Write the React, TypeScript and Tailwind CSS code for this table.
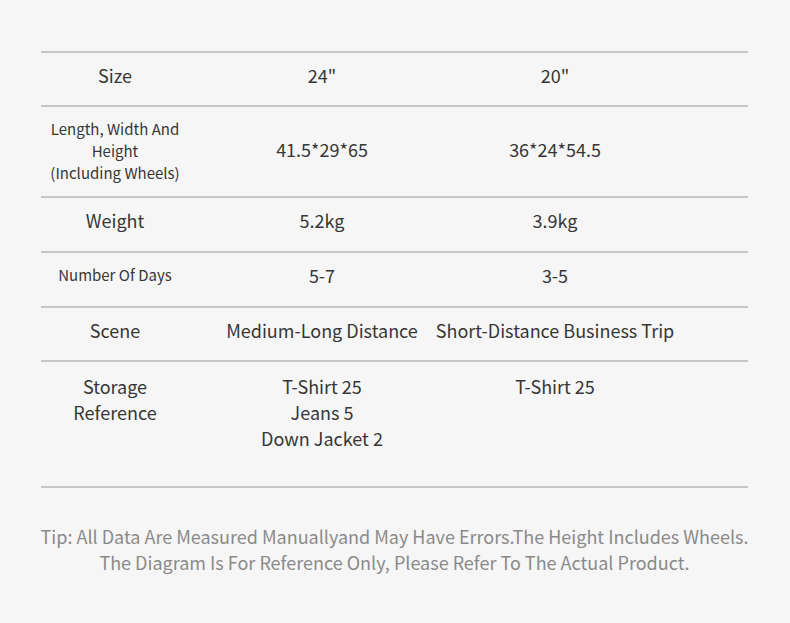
export default function App() {
    const rows = [
        { label: ['Size'], small: false, a: '24"', b: '20"', h: 'h-[54px] pb-[8px]', lp: '' },
        {
            label: ['Length, Width And', 'Height', '(Including Wheels)'],
            small: true,
            a: '41.5*29*65',
            b: '36*24*54.5',
            h: 'h-[91px] pb-[5px]',
            lp: 'pt-[4px]',
        },
        { label: ['Weight'], small: false, a: '5.2kg', b: '3.9kg', h: 'h-[55px] pb-[10px]', lp: '' },
        { label: ['Number Of Days'], small: true, a: '5-7', b: '3-5', h: 'h-[55px] pb-[10px]', lp: '' },
        { label: ['Scene'], small: false, a: 'Medium-Long Distance', b: 'Short-Distance Business Trip', h: 'h-[54px] pb-[8px]', lp: '' },
    ];

    return (
        <div
            className="w-[790px] h-[623px] bg-[#f6f6f6] text-[#363636] pt-[51px] px-[41px]"
            style={{ fontFamily: '"Noto Sans CJK SC", "Noto Sans", sans-serif' }}
        >
            <div className="w-[707px] border-t-2 border-[#c6c6c6]">
                {rows.map((r) => (
                    <div
                        key={r.a}
                        className={`grid grid-cols-[148px_266px_200px_1fr] items-center border-b-2 border-[#c6c6c6] ${r.h}`}
                    >
                        <div
                            className={
                                r.small
                                    ? `flex flex-col items-center text-[15px] leading-[22px] whitespace-nowrap ${r.lp}`
                                    : 'flex flex-col items-center text-[18px] leading-[26px]'
                            }
                        >
                            {r.label.map((l) => (
                                <span key={l}>{l}</span>
                            ))}
                        </div>
                        <div className="flex justify-center text-[18px] leading-[26px] whitespace-nowrap">{r.a}</div>
                        <div className="flex justify-center text-[18px] leading-[26px] whitespace-nowrap">{r.b}</div>
                        <div />
                    </div>
                ))}

                {/* Storage row: top aligned */}
                <div className="grid grid-cols-[148px_266px_200px_1fr] items-start h-[126px] border-b-2 border-[#c6c6c6] pt-[11px] text-[18px] leading-[26px]">
                    <div className="text-center">
                        Storage
                        <br />
                        Reference
                    </div>
                    <div className="text-center">
                        T-Shirt 25
                        <br />
                        Jeans 5
                        <br />
                        Down Jacket 2
                    </div>
                    <div className="text-center">T-Shirt 25</div>
                    <div />
                </div>
            </div>

            <div className="w-[707px] mt-[35px] flex flex-col items-center text-[18px] leading-[26px] text-[#8a8a8a] whitespace-nowrap">
                <span>Tip: All Data Are Measured Manuallyand May Have Errors.The Height Includes Wheels.</span>
                <span>The Diagram Is For Reference Only, Please Refer To The Actual Product.</span>
            </div>
        </div>
    );
}
